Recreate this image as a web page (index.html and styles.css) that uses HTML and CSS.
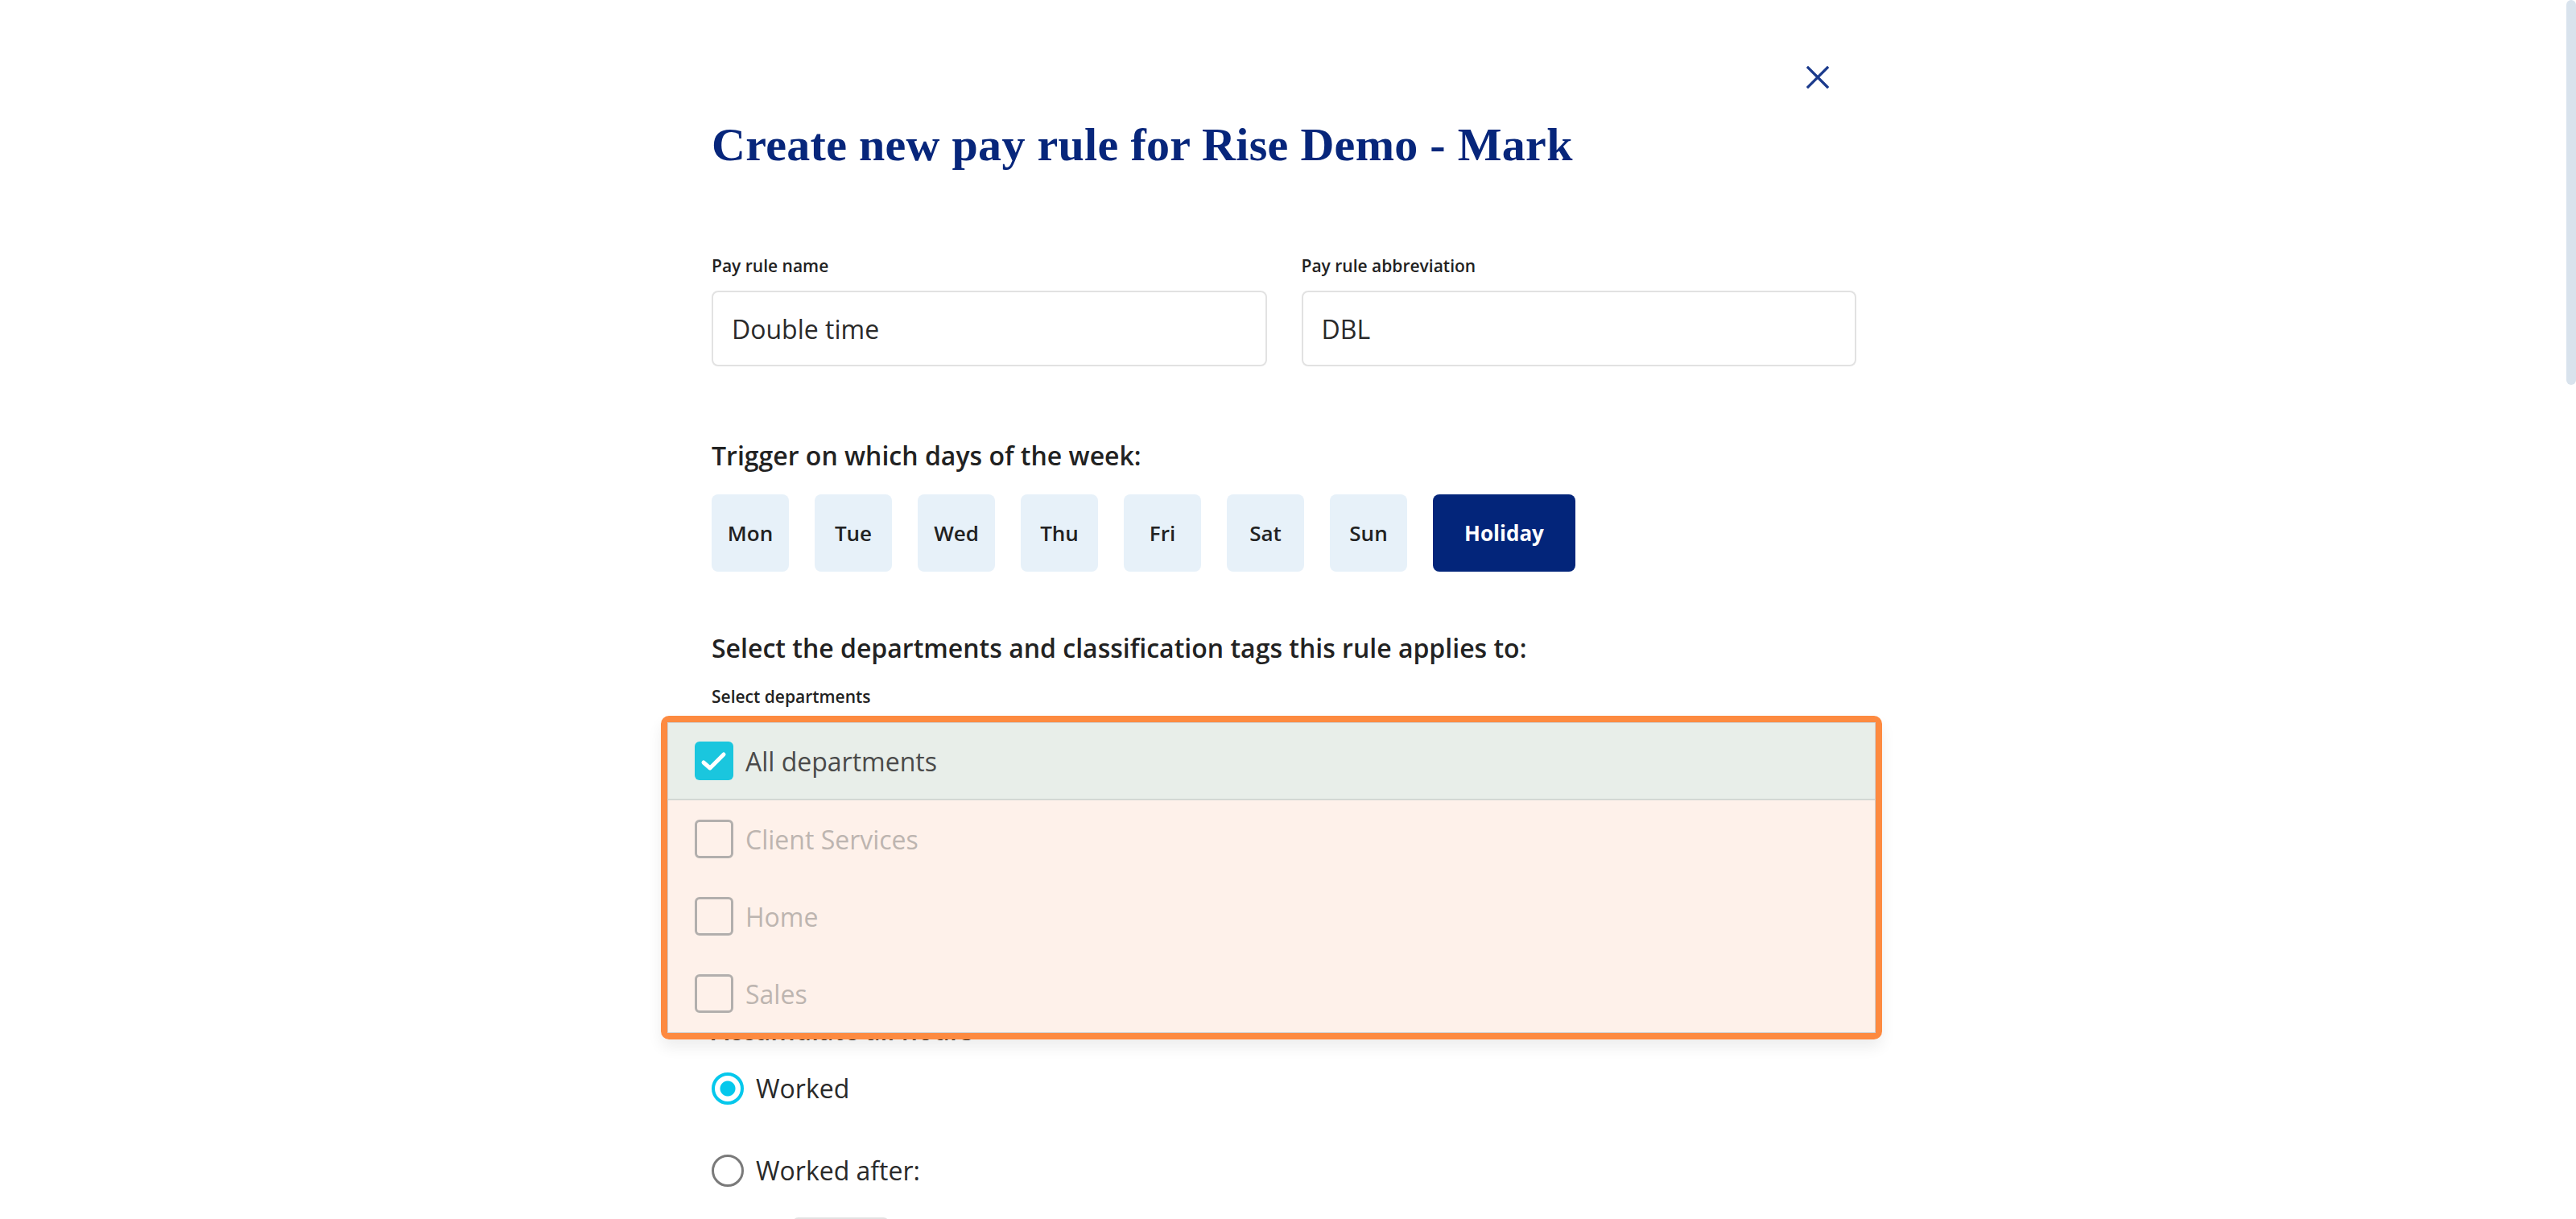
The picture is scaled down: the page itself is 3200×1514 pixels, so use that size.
FILE: index.html
```html
<!DOCTYPE html>
<html lang="en">
<head>
    <meta charset="UTF-8">
    <meta name="viewport" content="width=device-width, initial-scale=1.0">
    <title>Create new pay rule</title>
    <link rel="stylesheet" href="styles.css">
</head>
<body>
    <div class="scroll-thumb"></div>

    <main class="modal">
        <div class="modal-top">
            <button class="close-btn" aria-label="Close">
                <svg width="28" height="28" viewBox="0 0 28 28">
                    <path d="M2 2 L26 26 M26 2 L2 26" stroke="#1b3a8c" stroke-width="3.2" stroke-linecap="square" fill="none"/>
                </svg>
            </button>
        </div>

        <h1 class="title">Create new pay rule for Rise Demo - Mark</h1>

        <div class="field-row">
            <div class="field">
                <label class="small-label">Pay rule name</label>
                <div class="text-input">Double time</div>
            </div>
            <div class="field">
                <label class="small-label">Pay rule abbreviation</label>
                <div class="text-input">DBL</div>
            </div>
        </div>

        <h2 class="section-label trigger-label">Trigger on which days of the week:</h2>
        <div class="days">
            <button class="day">Mon</button>
            <button class="day">Tue</button>
            <button class="day">Wed</button>
            <button class="day">Thu</button>
            <button class="day">Fri</button>
            <button class="day">Sat</button>
            <button class="day">Sun</button>
            <button class="day day-wide active">Holiday</button>
        </div>

        <h2 class="section-label dept-label">Select the departments and classification tags this rule applies to:</h2>

        <div class="field dept-field">
            <label class="small-label">Select departments</label>
            <div class="select-box">
                <!-- open dropdown, highlighted -->
                <div class="dropdown">
                    <ul class="dropdown-list">
                        <li class="option checked">
                            <span class="checkbox">
                                <svg width="48" height="48" viewBox="0 0 48 48">
                                    <path d="M11 26 L19 33 L36 16" stroke="#fff" stroke-width="5" stroke-linecap="round" stroke-linejoin="round" fill="none"/>
                                </svg>
                            </span>
                            All departments
                        </li>
                        <li class="option"><span class="checkbox"></span>Client Services</li>
                        <li class="option"><span class="checkbox"></span>Home</li>
                        <li class="option"><span class="checkbox"></span>Sales</li>
                    </ul>
                </div>
            </div>
        </div>

        <h2 class="section-label accum-label">Accumulate all hours</h2>

        <div class="radios">
            <label class="radio-row">
                <span class="radio selected"></span>
                Worked
            </label>
            <label class="radio-row">
                <span class="radio"></span>
                Worked after:
            </label>
        </div>

        <div class="hours-input"></div>
    </main>
</body>
</html>
```

FILE: styles.css
```css
body {
    margin: 0;
    padding-right: 10px;
    background: #ffffff;
    font-family: "Open Sans", "Noto Sans", sans-serif;
    color: #222222;
}

.scroll-thumb {
    position: fixed;
    top: 0;
    right: 0;
    width: 12px;
    height: 478px;
    background-color: #d9e3ed;
    border-radius: 6px;
}

.modal {
    width: 1422px;
    margin: 0 auto;
    padding-top: 82px;
    padding-bottom: 200px;
}

.modal-top {
    display: flex;
    justify-content: flex-end;
    padding-right: 34px;
}

.close-btn {
    width: 28px;
    height: 28px;
    padding: 0;
    border: none;
    background: none;
    cursor: pointer;
    display: block;
}

.close-btn svg {
    display: block;
}

.title {
    margin: 38px 0 0;
    font-family: "Liberation Serif", "DejaVu Serif", serif;
    font-weight: 700;
    font-size: 58px;
    letter-spacing: 0.3px;
    line-height: 64px;
    color: #07267b;
}

.field-row {
    display: grid;
    grid-template-columns: 1fr 1fr;
    gap: 43px;
    margin-top: 104px;
}

.field {
    display: flex;
    flex-direction: column;
}

.small-label {
    font-size: 21px;
    font-weight: 600;
    line-height: 28px;
    color: #222222;
}

.text-input {
    margin-top: 17px;
    height: 94px;
    box-sizing: border-box;
    border: 2px solid #e2e2e2;
    border-radius: 8px;
    padding-left: 23px;
    display: flex;
    align-items: center;
    font-size: 32px;
    color: #2a2a2a;
}

.section-label {
    margin: 0;
    font-size: 32px;
    font-weight: 600;
    line-height: 44px;
    color: #222222;
}

.trigger-label {
    margin-top: 89px;
}

.days {
    display: flex;
    gap: 32px;
    margin-top: 26px;
}

.day {
    width: 96px;
    height: 96px;
    padding: 0;
    border: none;
    border-radius: 8px;
    background-color: #e7f1f9;
    font-family: "Open Sans", "Noto Sans", sans-serif;
    font-size: 26px;
    font-weight: 600;
    color: #222222;
    cursor: pointer;
}

.day-wide {
    width: 177px;
}

.day.active {
    background-color: #03257a;
    color: #ffffff;
    font-weight: 700;
}

.dept-label {
    margin-top: 73px;
}

.dept-field {
    margin-top: 24px;
}

.select-box {
    position: relative;
    margin-top: 17px;
    height: 94px;
    box-sizing: border-box;
    border: 2px solid #e2e2e2;
    border-radius: 8px;
}

.dropdown {
    position: absolute;
    top: -9px;
    left: -65px;
    width: 1517px;
    box-sizing: border-box;
    border: 8px solid #fd8a40;
    border-radius: 10px;
    box-shadow: 0 10px 18px rgba(0, 0, 0, 0.07);
    z-index: 5;
}

.dropdown-list {
    list-style: none;
    margin: 0;
    padding: 0;
    border: 1px solid #cfcfcf;
    background-color: #fef1ea;
}

.option {
    height: 96px;
    box-sizing: border-box;
    display: flex;
    align-items: center;
    gap: 15px;
    padding-left: 33px;
    font-size: 32px;
    color: #bdb5b0;
}

.option.checked {
    background-color: #e8eee9;
    border-bottom: 2px solid #d3d8d4;
    color: #4a4a4a;
}

.checkbox {
    width: 48px;
    height: 48px;
    box-sizing: border-box;
    border: 3px solid #b2afad;
    border-radius: 6px;
    flex-shrink: 0;
}

.option.checked .checkbox {
    border: none;
    background-color: #1ac6de;
}

.checkbox svg {
    display: block;
}

.accum-label {
    margin-top: 268px;
}

.radios {
    display: flex;
    flex-direction: column;
    gap: 62px;
    margin-top: 30px;
}

.radio-row {
    display: flex;
    align-items: center;
    gap: 15px;
    height: 40px;
    font-size: 32px;
    line-height: 40px;
    color: #2a2a2a;
}

.radio {
    width: 40px;
    height: 40px;
    box-sizing: border-box;
    border: 3px solid #7a7a7a;
    border-radius: 50%;
    flex-shrink: 0;
}

.radio.selected {
    border: 4px solid #05c8ec;
    background: radial-gradient(circle, #05c8ec 0 9px, #ffffff 10px);
}

.hours-input {
    margin-top: 38px;
    margin-left: 100px;
    width: 117px;
    height: 80px;
    border: 2px solid #e2e2e2;
    border-radius: 8px;
}
```
